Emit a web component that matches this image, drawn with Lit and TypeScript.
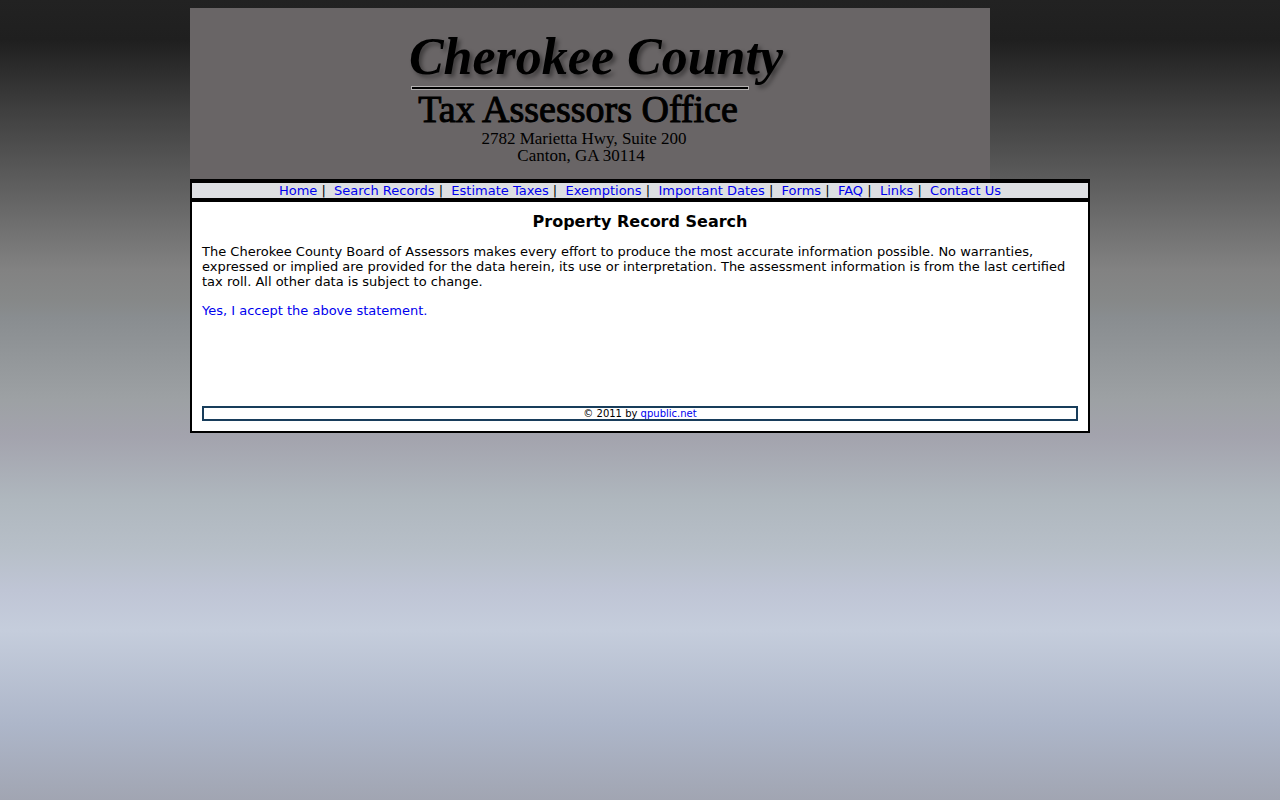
import { LitElement, html, css } from "lit";
import { customElement } from "lit/decorators.js";

const NAV = [
  "Home",
  "Search Records",
  "Estimate Taxes",
  "Exemptions",
  "Important Dates",
  "Forms",
  "FAQ",
  "Links",
  "Contact Us",
];

@customElement("app-root")
export class AppRoot extends LitElement {
  static styles = css`
    :host {
      display: block;
      box-sizing: border-box;
      min-height: 100vh;
      padding: 8px;
      color: #000;
      font: 13px/15px "DejaVu Sans", Verdana, sans-serif;
      background: linear-gradient(
        #222 0,
        #1f1f1f 40px,
        #3f3f3f 110px,
        #6a6a6a 213px,
        #828282 270px,
        #868888 300px,
        #898d90 318px,
        #9da1a4 400px,
        #a3a3ad 436px,
        #afb7be 500px,
        #b7bfc8 550px,
        #bfc5d5 590px,
        #c5cddc 630px,
        #adb6c9 725px,
        #a1a5b2 800px
      );
    }
    a {
      color: #00e;
      text-decoration: none;
    }
    .page {
      max-width: 900px;
      margin: 0 auto;
    }
    .banner {
      max-width: 800px;
      background: #696566;
    }
    .logo {
      display: block;
      width: 100%;
      height: auto;
    }
    .script {
      font: italic bold 52px "Brush Script MT", "Liberation Serif", serif;
      filter: drop-shadow(3px 3px 2px rgb(0 0 0 / 40%));
    }
    .office {
      font: 38px "Liberation Serif", serif;
      stroke: #000;
      stroke-width: 1px;
    }
    .address {
      font: 17px "Liberation Serif", serif;
    }
    .panel {
      border: 2px solid #000;
      background: #fff;
    }
    nav {
      border: solid #000;
      border-width: 2px 0 4px;
      background: #dddfe2;
      text-align: center;
    }
    main {
      padding: 10px;
    }
    h1 {
      margin: 0 0 13px;
      font-size: 16px;
      line-height: 19px;
      text-align: center;
    }
    p {
      margin: 0 0 14px;
    }
    .accept {
      margin-bottom: 88px;
    }
    footer {
      border: 2px solid #183d5b;
      font-size: 10px;
      line-height: 11px;
      text-align: center;
    }
  `;

  render() {
    return html`
      <div class="page">
        <header class="banner">
          <svg class="logo" viewBox="0 0 800 171" role="img" aria-label="Cherokee County Tax Assessors Office">
            <text class="script" x="406" y="66" text-anchor="middle">Cherokee County</text>
            <rect x="221" y="78" width="338" height="4" fill="#b5b2b2" />
            <rect x="222" y="79" width="336" height="2" />
            <text class="office" x="388" y="114" text-anchor="middle">Tax Assessors Office</text>
            <text class="address" x="394" y="136" text-anchor="middle">2782 Marietta Hwy, Suite 200</text>
            <text class="address" x="391" y="153" text-anchor="middle">Canton, GA 30114</text>
          </svg>
        </header>
        <div class="panel">
          <nav>${NAV.map((label, i) => html`${i ? html` |&nbsp; ` : ""}<a href="#">${label}</a>`)}</nav>
          <main>
            <h1>Property Record Search</h1>
            <p>
              The Cherokee County Board of Assessors makes every effort to produce the most accurate information
              possible. No warranties, expressed or implied are provided for the data herein, its use or
              interpretation. The assessment information is from the last certified tax roll. All other data is
              subject to change.
            </p>
            <p class="accept"><a href="#">Yes, I accept the above statement.</a></p>
            <footer>© 2011 by <a href="#">qpublic.net</a></footer>
          </main>
        </div>
      </div>
    `;
  }
}
